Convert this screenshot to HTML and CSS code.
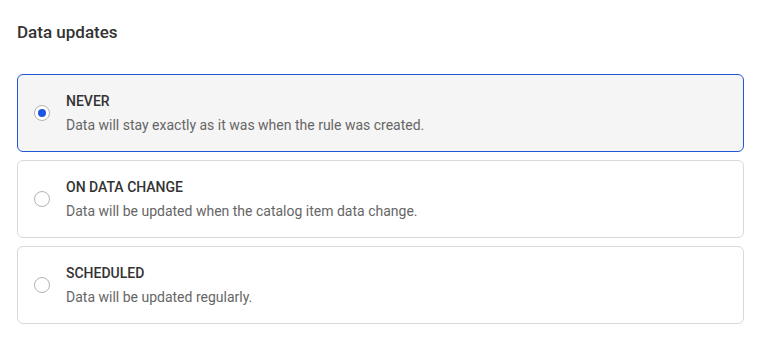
FILE: index.html
```html
<!DOCTYPE html>
<html lang="en">
<head>
    <meta charset="UTF-8">
    <title>Data updates</title>
    <link rel="stylesheet" href="styles.css">
</head>
<body>
    <div class="section">
        <h2 class="section-title">Data updates</h2>
        <div class="options">
            <label class="option selected">
                <span class="radio"><span class="dot"></span></span>
                <span class="option-text">
                    <span class="option-label">NEVER</span>
                    <span class="option-desc">Data will stay exactly as it was when the rule was created.</span>
                </span>
            </label>
            <label class="option">
                <span class="radio"></span>
                <span class="option-text">
                    <span class="option-label">ON DATA CHANGE</span>
                    <span class="option-desc">Data will be updated when the catalog item data change.</span>
                </span>
            </label>
            <label class="option">
                <span class="radio"></span>
                <span class="option-text">
                    <span class="option-label">SCHEDULED</span>
                    <span class="option-desc">Data will be updated regularly.</span>
                </span>
            </label>
        </div>
    </div>
</body>
</html>
```

FILE: styles.css
```css
body {
    margin: 0;
    padding: 20px 24px 0 17px;
    background: #ffffff;
    font-family: Roboto, "Liberation Sans", sans-serif;
    color: #333333;
}

.section-title {
    margin: 0 0 30px;
    font-size: 17px;
    line-height: 24px;
    font-weight: 500;
    color: #333333;
}

.options {
    display: flex;
    flex-direction: column;
    gap: 8px;
}

.option {
    display: flex;
    align-items: center;
    gap: 16px;
    padding: 16px 16px;
    border: 1px solid #d9d9d9;
    border-radius: 6px;
    background: #ffffff;
    cursor: pointer;
}

.option.selected {
    border-color: #2457d8;
    background: #f5f5f5;
}

.radio {
    width: 14px;
    height: 14px;
    border: 1px solid #b3b3b3;
    border-radius: 50%;
    background: #ffffff;
    display: flex;
    align-items: center;
    justify-content: center;
    flex-shrink: 0;
}

.dot {
    width: 8px;
    height: 8px;
    border-radius: 50%;
    background: #1f56e0;
}

.option-text {
    display: flex;
    flex-direction: column;
    gap: 4px;
}

.option-label {
    font-size: 14px;
    line-height: 20px;
    font-weight: 500;
    color: #333333;
}

.option-desc {
    font-size: 14px;
    line-height: 20px;
    color: #666666;
}
```
